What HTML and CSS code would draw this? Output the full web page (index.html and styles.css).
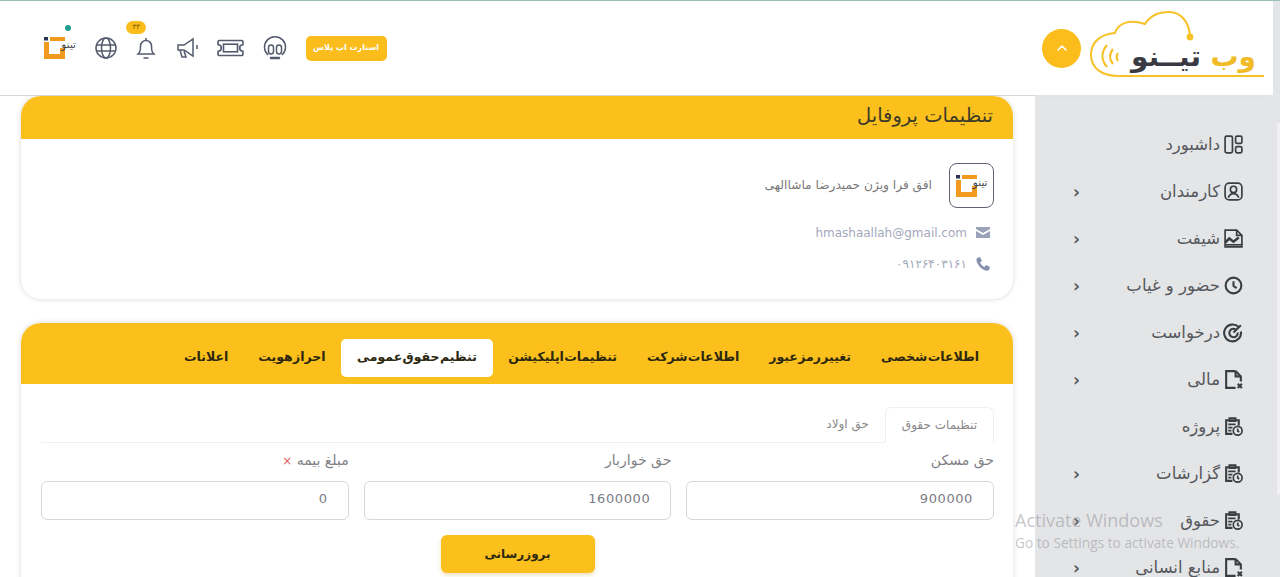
FILE: index.html
```html
<!DOCTYPE html>
<html lang="fa" dir="rtl">
<head>
  <meta charset="UTF-8">
  <meta name="viewport" content="width=device-width, initial-scale=1.0">
  <title>وب تینو - تنظیمات پروفایل</title>
  <link rel="stylesheet" href="styles.css">
</head>
<body>
  <svg class="sprite" aria-hidden="true">
    <symbol id="i-dash" viewBox="0 0 20 20"><rect x="2" y="2" width="7" height="16" rx="1.5"/><rect x="12" y="2" width="6" height="7" rx="1.5"/><rect x="12" y="12" width="6" height="6" rx="1.5"/></symbol>
    <symbol id="i-user" viewBox="0 0 20 20"><rect x="2" y="2" width="16" height="16" rx="4"/><circle cx="10" cy="8" r="3"/><path d="M5 16c1-3 3-4 5-4s4 1 5 4"/></symbol>
    <symbol id="i-chart" viewBox="0 0 20 20"><path d="M13 2H2v16h16V7z"/><path d="M13 2v5h5"/><path d="M2 14l4-4 4 3 5-4" stroke-width="2.4"/><path d="M2 16h16"/></symbol>
    <symbol id="i-clock" viewBox="0 0 20 20"><circle cx="10" cy="10" r="7.5" stroke-width="2"/><path d="M10 6v4.500l3 2" stroke-width="2"/></symbol>
    <symbol id="i-target" viewBox="0 0 20 20"><path d="M15 5a8 8 0 1 0 2 4" stroke-width="2"/><path d="M12 7a4 4 0 1 0 2 3" stroke-width="2"/><path d="M10 10l7-7" stroke-width="2"/></symbol>
    <symbol id="i-doc" viewBox="0 0 20 20"><path d="M12 2H3v16h9" stroke-width="2"/><path d="M12 2l5 5v5M12 2v5h5" stroke-width="2"/><path d="M14 14l4 4M18 14l-4 4" stroke-width="2"/></symbol>
    <symbol id="i-clip" viewBox="0 0 20 20"><path d="M9 17H3V4h12v5" stroke-width="2"/><path d="M6 2h6v3H6zM5 8h7M5 11h4M5 14h3" stroke-width="1.6"/><circle cx="14" cy="14" r="4.200" stroke-width="1.6"/><path d="M14 12v2.300l1.500 1"/></symbol>
    <symbol id="i-mark" viewBox="0 0 32 22"><path d="M0 5h5v12h11v-6h5v11H0z" fill="#f29a1f"/><path d="M6 0h15v4H6z" fill="#f29a1f"/><rect x="0" y="0" width="4" height="3.500" fill="#2a3350"/></symbol>
  </svg>

  <aside class="sidebar">
    <div class="brand">
      <button class="brand-toggle" aria-label="toggle">
        <svg width="14" height="14" viewBox="0 0 14 14"><path d="M3 9l4-4 4 4" fill="none" stroke="#fff" stroke-width="1.6" stroke-linecap="round" stroke-linejoin="round"/></svg>
      </button>
      <svg class="brand-logo" width="180" height="74" viewBox="0 0 180 74">
        <path d="M176 68H30C14 68 3 60 3 47c0-14 11-21 24-22 3-10 14-14 30-9 5-8 14-12 24-12 12 0 20 10 21 24" fill="none" stroke="#f7c127" stroke-width="2"/>
        <circle cx="102" cy="29" r="3.400" fill="#f7c127"/>
        <path d="M19 37c-6 7-6 15 0 22M25 41c-4 5-4 10 0 15M30 45c-2 3-2 5 0 8" fill="none" stroke="#f7c127" stroke-width="2.200"/>
        <text class="logo-dark" x="113" y="58">تیــنو</text>
        <text class="logo-gold" x="168" y="58">وب</text>
      </svg>
    </div>
    <ul class="nav">
      <li class="nav-item"><svg class="nav-icon"><use href="#i-dash"/></svg><span>داشبورد</span></li>
      <li class="nav-item"><svg class="nav-icon"><use href="#i-user"/></svg><span>کارمندان</span><i class="nav-arrow">‹</i></li>
      <li class="nav-item"><svg class="nav-icon"><use href="#i-chart"/></svg><span>شیفت</span><i class="nav-arrow">‹</i></li>
      <li class="nav-item"><svg class="nav-icon"><use href="#i-clock"/></svg><span>حضور و غیاب</span><i class="nav-arrow">‹</i></li>
      <li class="nav-item"><svg class="nav-icon"><use href="#i-target"/></svg><span>درخواست</span><i class="nav-arrow">‹</i></li>
      <li class="nav-item"><svg class="nav-icon"><use href="#i-doc"/></svg><span>مالی</span><i class="nav-arrow">‹</i></li>
      <li class="nav-item"><svg class="nav-icon"><use href="#i-clip"/></svg><span>پروژه</span></li>
      <li class="nav-item"><svg class="nav-icon"><use href="#i-clip"/></svg><span>گزارشات</span><i class="nav-arrow">‹</i></li>
      <li class="nav-item"><svg class="nav-icon"><use href="#i-clip"/></svg><span>حقوق</span><i class="nav-arrow">‹</i></li>
      <li class="nav-item"><svg class="nav-icon"><use href="#i-doc"/></svg><span>منابع انسانی</span><i class="nav-arrow">‹</i></li>
    </ul>
    <div class="scroll-thumb"></div>
  </aside>

  <main class="main">
    <header class="topbar">
      <a class="plus-btn">استارت اپ پلاس</a>
      <svg class="top-icon" width="24" height="26" viewBox="0 0 24 26"><path d="M5 20a10.500 10.500 0 1 1 14 0"/><rect x="5.500" y="10" width="5" height="9" rx="2.500"/><rect x="13.500" y="10" width="5" height="9" rx="2.500"/><path d="M8 23h8" stroke-width="2.500" stroke-linecap="round"/></svg>
      <svg class="top-icon" width="27" height="18" viewBox="1 1 25 16"><path d="M3 2h21a1 1 0 0 1 1 1v3a3 3 0 0 0 0 6v3a1 1 0 0 1-1 1H3a1 1 0 0 1-1-1v-3a3 3 0 0 0 0-6V3a1 1 0 0 1 1-1z"/><rect x="7" y="5.500" width="13" height="7"/></svg>
      <svg class="top-icon" width="23" height="24" viewBox="0 0 23 24"><path d="M2 9h6l9-6v17l-9-6H2z"/><path d="M4 14l2 7h4l-2-6M21 9v4"/></svg>
      <div class="bell">
        <svg class="top-icon" width="22" height="24" viewBox="0 0 22 24"><path d="M3 18c2-2 2.500-3 2.500-8a5.500 5.500 0 0 1 11 0c0 5 .5 6 2.500 8z"/><path d="M11 2v2M8.500 22h5"/></svg>
        <span class="bell-badge">۳۳</span>
      </div>
      <svg class="top-icon" width="22" height="22" viewBox="0 0 22 22"><circle cx="11" cy="11" r="10"/><ellipse cx="11" cy="11" rx="4.500" ry="10"/><path d="M1 8h20M1 14h20"/></svg>
      <div class="mini-logo">
        <span class="mini-dot"></span>
        <svg class="mini-mark"><use href="#i-mark"/></svg>
        <span class="mini-text">تینو</span>
      </div>
    </header>

    <div class="content">
      <section class="card">
        <h2 class="card-title">تنظیمات پروفایل</h2>
        <div class="profile">
          <div class="profile-head">
            <div class="profile-logo">
              <div class="mini-logo">
                <svg class="mini-mark"><use href="#i-mark"/></svg>
                <span class="mini-text">تینو</span>
              </div>
            </div>
            <span class="profile-name">افق فرا ویژن حمیدرضا ماشاالهی</span>
          </div>
          <div class="contact">
            <svg width="14" height="11" viewBox="0 0 14 11"><path d="M0 0h14v2L7 6 0 2zM0 4l7 4 7-4v7H0z" fill="#9aa1b8"/></svg>
            <span dir="ltr">hmashaallah@gmail.com</span>
          </div>
          <div class="contact">
            <svg width="14" height="14" viewBox="0 0 14 14"><path d="M1 1l3-1 2 4-2 1.500c1 2 2.500 3.500 4.500 4.500L10 8l4 2-1 3c-1 1-3 1-5 0C4 11 2 8 .5 4 .3 3 .5 2 1 1z" fill="#8790ad"/></svg>
            <span>۰۹۱۲۶۴۰۳۱۶۱</span>
          </div>
        </div>
      </section>

      <section class="card">
        <div class="tabs">
          <a class="tab">اطلاعات شخصی</a>
          <a class="tab">تغییر رمز عبور</a>
          <a class="tab">اطلاعات شرکت</a>
          <a class="tab">تنظیمات اپلیکیشن</a>
          <a class="tab tab-active">تنظیم حقوق عمومی</a>
          <a class="tab">احراز هویت</a>
          <a class="tab">اعلانات</a>
        </div>
        <div class="tab-body">
          <div class="subtabs">
            <a class="subtab subtab-active">تنظیمات حقوق</a>
            <a class="subtab">حق اولاد</a>
          </div>
          <div class="fields">
            <div class="field">
              <label for="housing">حق مسکن</label>
              <input id="housing" type="text" value="900000">
            </div>
            <div class="field">
              <label for="food">حق خواربار</label>
              <input id="food" type="text" value="1600000">
            </div>
            <div class="field">
              <label for="insurance">مبلغ بیمه <b class="required">×</b></label>
              <input id="insurance" type="text" value="0">
            </div>
          </div>
          <div class="actions"><button class="btn">بروزرسانی</button></div>
        </div>
      </section>
    </div>
  </main>

  <div class="watermark" dir="ltr">
    <div class="watermark-title">Activate Windows</div>
    <div class="watermark-sub">Go to Settings to activate Windows.</div>
  </div>
</body>
</html>
```

FILE: styles.css
```css
* {
  box-sizing: border-box;
}
html, body {
  height: 577px;
  overflow: hidden;
}
body {
  margin: 0;
  display: flex;
  font-family: "DejaVu Sans", sans-serif;
  background-color: #fff;
  border-top: 1px solid #9dbdb9;
}
.sprite {
  display: none;
}

/* sidebar */
.sidebar {
  position: relative;
  width: 245px;
  flex-shrink: 0;
  background-color: #e4e5e7;
}
.brand {
  display: flex;
  align-items: center;
  justify-content: space-between;
  height: 94px;
  margin-right: 7px;
  padding: 0 5px 0 7px;
  flex-direction: row-reverse;
  background-color: #fff;
  box-shadow: -3px 0 6px rgba(0, 0, 0, 0.03);
}
.brand-toggle {
  width: 39px;
  height: 39px;
  padding: 0;
  border: none;
  border-radius: 50%;
  background-color: #fbbd1c;
  display: flex;
  align-items: center;
  justify-content: center;
}
.brand-logo {
  margin-top: -6px;
}
.logo-dark {
  font-size: 28px;
  font-weight: bold;
  fill: #3a3a44;
}
.logo-gold {
  font-size: 28px;
  font-weight: bold;
  fill: #f0bb26;
}
.nav {
  list-style: none;
  margin: 0;
  padding: 26px 0 0;
}
.nav-item {
  display: flex;
  align-items: center;
  gap: 3px;
  height: 47px;
  padding: 0 36px 0 38px;
  font-size: 16.500px;
  color: #55575c;
}
.nav-icon {
  width: 21px;
  height: 21px;
  flex-shrink: 0;
  fill: none;
  stroke: #3a3d42;
  stroke-width: 1.6;
}
.nav-arrow {
  margin-right: auto;
  font-style: normal;
  font-size: 17px;
  font-weight: bold;
  color: #55575c;
}
.scroll-thumb {
  position: absolute;
  top: 122px;
  right: 0;
  width: 3px;
  height: 371px;
  background-color: #f1f1f3;
}

/* header */
.main {
  flex: 1;
  min-width: 0;
}
.topbar {
  position: relative;
  z-index: 1;
  display: flex;
  align-items: center;
  justify-content: flex-end;
  gap: 18.600px;
  height: 95px;
  padding: 0 0 0 44px;
  background-color: #fff;
  border-bottom: 1px solid #d6d6d6;
}
.plus-btn {
  width: 81px;
  height: 25px;
  line-height: 24px;
  text-align: center;
  font-size: 8px;
  font-weight: bold;
  color: #fff;
  background-color: #fbbd1c;
  border-radius: 5px;
}
.top-icon {
  display: block;
  fill: none;
  stroke: #555a6e;
  stroke-width: 1.5;
}
.bell {
  position: relative;
}
.bell-badge {
  position: absolute;
  top: -15px;
  left: -9px;
  width: 20px;
  height: 13px;
  line-height: 12px;
  text-align: center;
  font-size: 7px;
  color: #7c5a00;
  background-color: #fbbd1c;
  border-radius: 7px;
}
.mini-logo {
  position: relative;
  width: 32px;
  height: 22px;
}
.mini-mark {
  display: block;
  width: 32px;
  height: 22px;
}
.mini-dot {
  position: absolute;
  top: -12px;
  left: 21px;
  width: 6px;
  height: 6px;
  border-radius: 50%;
  background-color: #1f9d8f;
}
.mini-text {
  position: absolute;
  top: 1px;
  right: 0;
  font-size: 10.500px;
  line-height: 13px;
  white-space: nowrap;
  color: #444;
}

/* cards */
.content {
  display: flex;
  flex-direction: column;
  gap: 24px;
  padding: 0 22px 0 21px;
}
.card {
  background-color: #fff;
  border-radius: 20px;
  overflow: hidden;
  box-shadow: 0 0 5px rgba(60, 60, 80, 0.2);
}
.card-title {
  margin: 0;
  height: 43px;
  line-height: 39px;
  padding: 0 20px;
  font-size: 19.500px;
  font-weight: normal;
  color: #3c3a28;
  background-color: #fbc01c;
}
.profile {
  height: 160px;
  padding: 24px 19px 0;
}
.profile-head {
  display: flex;
  align-items: center;
  gap: 17px;
  margin-bottom: 9px;
}
.profile-logo {
  width: 45px;
  height: 45px;
  display: flex;
  align-items: center;
  justify-content: center;
  border: 1px solid #5e6270;
  border-radius: 8px;
}
.profile-name {
  font-size: 12.200px;
  line-height: 13px;
  color: #777;
}
.contact {
  display: flex;
  align-items: center;
  gap: 9px;
  height: 31px;
  padding-right: 4px;
  font-size: 12px;
  color: #a3a8bc;
}

/* tabs */
.tabs {
  display: flex;
  align-items: flex-end;
  height: 61px;
  padding: 0 19px 7px;
  background-color: #fbc01c;
}
.tab {
  padding: 0 15px;
  height: 38px;
  line-height: 36px;
  font-size: 12.500px;
  font-weight: bold;
  word-spacing: -4px;
  white-space: nowrap;
  color: #2c2710;
  border-radius: 5px;
}
.tab-active {
  padding: 0 16.500px;
  background-color: #fff;
}
.tab-body {
  padding: 23px 19px 30px 20px;
}
.subtabs {
  display: flex;
  height: 36px;
  border-bottom: 1px solid #eef0f3;
}
.subtab {
  height: 36px;
  line-height: 34px;
  padding: 0 16px;
  font-size: 12px;
  color: #888;
  border-radius: 6px 6px 0 0;
}
.subtab-active {
  background-color: #fff;
  border: 1px solid #eef0f3;
  border-bottom-color: #fff;
}
.fields {
  display: grid;
  grid-template-columns: repeat(3, 1fr);
  gap: 15px;
  margin-top: 9px;
}
.field label {
  display: block;
  height: 20px;
  margin-bottom: 9px;
  line-height: 16px;
  font-size: 14px;
  color: #808186;
}
.required {
  color: #e45c5c;
  font-size: 12px;
  font-weight: normal;
}
.field input {
  width: 100%;
  height: 39px;
  padding: 0 20px 5px;
  font-family: inherit;
  font-size: 13px;
  letter-spacing: 0.6px;
  color: #7a7c84;
  background-color: #fff;
  border: 1px solid #d5d8dd;
  border-radius: 6px;
  outline: none;
}
.actions {
  display: flex;
  justify-content: center;
  margin-top: 15px;
}
.btn {
  width: 154px;
  height: 38px;
  font-family: inherit;
  font-size: 12px;
  font-weight: bold;
  color: #2c2710;
  background-color: #fbc01c;
  border: none;
  border-radius: 6px;
  box-shadow: 0 2px 4px rgba(200, 150, 20, 0.3);
}

/* windows watermark */
.watermark {
  position: absolute;
  left: 1015px;
  top: 508px;
  font-family: "Open Sans", sans-serif;
  color: rgba(150, 150, 155, 0.55);
  pointer-events: none;
}
.watermark-title {
  font-size: 18px;
  line-height: 24px;
}
.watermark-sub {
  margin-top: 2px;
  font-size: 13.700px;
  line-height: 17px;
}
```
